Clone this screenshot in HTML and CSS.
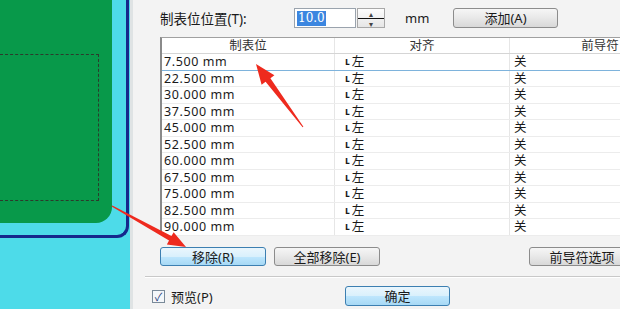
FILE: index.html
```html
<!DOCTYPE html>
<html>
<head>
<meta charset="utf-8">
<link rel="stylesheet" href="styles.css">
</head>
<body>
<div class="page">
  <div class="canvas">
    <div class="frame">
      <div class="green">
        <div class="dashed"></div>
      </div>
    </div>
  </div>
  <div class="gap"></div>
  <div class="dialog">
    <div class="toprow">
      <span class="label">制表位位置(T):</span>
      <div class="field">
        <div class="input"><span class="sel">10.0</span></div>
        <div class="spin"><span class="up">▴</span><span class="dn">▾</span></div>
      </div>
      <span class="unit">mm</span>
      <button class="btn add">添加(A)</button>
    </div>
    <div class="table">
      <div class="row head">
        <div class="c c1 hc">制表位</div>
        <div class="c c2 hc">对齐</div>
        <div class="c c3 hc">前导符</div>
      </div>
      <div class="row focus"><div class="c c1">7.500 mm</div><div class="c c2"><span class="mk">ʟ</span>左</div><div class="c c3">关</div></div>
      <div class="row"><div class="c c1">22.500 mm</div><div class="c c2"><span class="mk">ʟ</span>左</div><div class="c c3">关</div></div>
      <div class="row"><div class="c c1">30.000 mm</div><div class="c c2"><span class="mk">ʟ</span>左</div><div class="c c3">关</div></div>
      <div class="row"><div class="c c1">37.500 mm</div><div class="c c2"><span class="mk">ʟ</span>左</div><div class="c c3">关</div></div>
      <div class="row"><div class="c c1">45.000 mm</div><div class="c c2"><span class="mk">ʟ</span>左</div><div class="c c3">关</div></div>
      <div class="row"><div class="c c1">52.500 mm</div><div class="c c2"><span class="mk">ʟ</span>左</div><div class="c c3">关</div></div>
      <div class="row"><div class="c c1">60.000 mm</div><div class="c c2"><span class="mk">ʟ</span>左</div><div class="c c3">关</div></div>
      <div class="row"><div class="c c1">67.500 mm</div><div class="c c2"><span class="mk">ʟ</span>左</div><div class="c c3">关</div></div>
      <div class="row"><div class="c c1">75.000 mm</div><div class="c c2"><span class="mk">ʟ</span>左</div><div class="c c3">关</div></div>
      <div class="row"><div class="c c1">82.500 mm</div><div class="c c2"><span class="mk">ʟ</span>左</div><div class="c c3">关</div></div>
      <div class="row"><div class="c c1">90.000 mm</div><div class="c c2"><span class="mk">ʟ</span>左</div><div class="c c3">关</div></div>
    </div>
    <div class="btnrow">
      <button class="btn blue">移除(R)</button>
      <button class="btn">全部移除(E)</button>
      <button class="btn leader">前导符选项</button>
    </div>
    <div class="sep"></div>
    <div class="bottom">
      <label class="chk"><span class="box">✓</span>预览(P)</label>
      <button class="btn blue ok">确定</button>
    </div>
  </div>
  <svg class="arrows" width="620" height="309" viewBox="0 0 620 309">
    <polygon fill="#ee2a1e" points="256,64 274.4,75.2 270.4,78.2 303.4,126.7 302.6,127.3 265.6,81.8 261.6,84.8"/>
    <polygon fill="#ee2a1e" points="186,247 173.65,232.15 171.46,236.08 112.34,205.39 111.66,206.61 169.04,240.46 166.85,244.4"/>
  </svg>
</div>
</body>
</html>
```

FILE: styles.css
```css
* { box-sizing: border-box; }
html, body { margin: 0; padding: 0; }
body {
  width: 620px;
  height: 309px;
  overflow: hidden;
  font-family: "Noto Sans", "Noto Sans CJK SC", sans-serif;
  color: #1a1a1a;
}
.page {
  position: relative;
  display: flex;
  width: 620px;
  height: 309px;
  overflow: hidden;
}
.canvas {
  width: 130px;
  flex: none;
  background: #4ddbe9;
}
.frame {
  width: 129px;
  height: 238px;
  border-right: 3px solid #15288c;
  border-bottom: 3px solid #15288c;
  border-bottom-right-radius: 12px;
}
.green {
  width: 112px;
  height: 223px;
  background: #08994a;
  border-bottom-right-radius: 16px;
  padding-top: 54px;
}
.dashed {
  width: 99px;
  height: 147px;
  border: 1px dashed #2c3a2c;
  border-left: none;
}
.gap {
  width: 3px;
  flex: none;
  background: #dfe3e4;
}
.dialog {
  flex: 1;
  background: #f3f3f3;
  overflow: hidden;
  display: flex;
  flex-direction: column;
  padding-left: 10px;
}
.toprow {
  height: 37px;
  display: flex;
  align-items: center;
  padding-left: 17px;
  padding-bottom: 1px;
}
.label {
  font-size: 13.5px;
  width: 134px;
  flex: none;
}
.field {
  display: flex;
  height: 20px;
  width: 91px;
  flex: none;
}
.input {
  width: 63px;
  height: 20px;
  background: #fff;
  border: 1px solid #9aa3ad;
  padding: 1px 2px;
  display: flex;
  align-items: center;
}
.sel {
  background: #3b86e0;
  color: #fff;
  font-family: "DejaVu Serif", serif;
  font-size: 12px;
  line-height: 15px;
  padding: 0 1px;
}
.spin {
  width: 28px;
  height: 20px;
  display: flex;
  flex-direction: column;
  border: 1px solid #a8a8a8;
  background: linear-gradient(#fdfdfd, #e6e6e6);
  margin-left: 1px;
}
.spin .up, .spin .dn {
  flex: 1;
  font-size: 8px;
  line-height: 9px;
  text-align: center;
  color: #444;
}
.spin .up { border-bottom: 1px solid #111; }
.unit {
  font-size: 13px;
  margin-left: 20px;
  width: 48px;
  flex: none;
}
.btn {
  font-family: "Noto Sans", "Noto Sans CJK SC", sans-serif;
  font-size: 13px;
  color: #1a1a1a;
  height: 19px;
  width: 106px;
  padding: 0;
  border: 1px solid #8c8c8c;
  border-radius: 3px;
  background: linear-gradient(#f6f6f6 0%, #e8e8e8 50%, #d8d8d8 100%);
  line-height: 16px;
  flex: none;
}
.btn.add { height: 20px; width: 105px; }
.table {
  margin-left: 17px;
  width: 530px;
  height: 198px;
  background: #fff;
  border-top: 1px solid #a0a0a0;
  border-left: 2px solid #8a8a8a;
  flex: none;
}
.row {
  display: flex;
  align-items: center;
  height: 16.5px;
  border-bottom: 1px solid #ececec;
  font-size: 12.5px;
  line-height: 15px;
}
.row.head {
  height: 16px;
  border-bottom: 1px solid #d5d5d5;
  background: #fff;
}
.row.focus { border-bottom: 1px solid #7eb3dc; }
.c {
  align-self: stretch;
  display: flex;
  align-items: center;
  border-right: 1px solid #e6e6e6;
  white-space: nowrap;
}
.c1 { width: 173px; padding-left: 2px; letter-spacing: 0.6px; }
.c2 { width: 175px; padding-left: 10px; }
.c3 { width: 180px; padding-left: 4px; border-right: none; }
.hc {
  justify-content: center;
  padding-left: 0;
  font-size: 12.5px;
  line-height: 14px;
  color: #333;
  letter-spacing: 0;
}
.mk { font-size: 10px; font-weight: bold; margin-right: 2px; }
.btnrow {
  display: flex;
  margin-top: 12px;
  padding-left: 17px;
  gap: 8px;
  height: 19px;
}
.btn.blue {
  border-color: #3c7fb1;
  background: linear-gradient(#eaf6fd 0%, #d9f0fc 50%, #bee6fd 51%, #a7d9f5 100%);
}
.btn.leader { margin-left: 141px; }
.sep {
  margin-top: 10px;
  margin-left: 2px;
  height: 2px;
  border-top: 1px solid #c8c8c8;
  border-bottom: 1px solid #fff;
  flex: none;
}
.bottom {
  display: flex;
  align-items: center;
  margin-top: 8px;
  padding-left: 9px;
  height: 20px;
}
.chk {
  display: flex;
  align-items: center;
  font-size: 13px;
  width: 193px;
  flex: none;
}
.box {
  width: 13px;
  height: 13px;
  border: 1px solid #7a8a99;
  background: #f4f7fa;
  font-size: 11px;
  line-height: 11px;
  text-align: center;
  color: #2a3f7a;
  margin-right: 6px;
}
.btn.ok { width: 105px; height: 20px; }
.arrows {
  position: absolute;
  left: 0;
  top: 0;
  pointer-events: none;
}
```
